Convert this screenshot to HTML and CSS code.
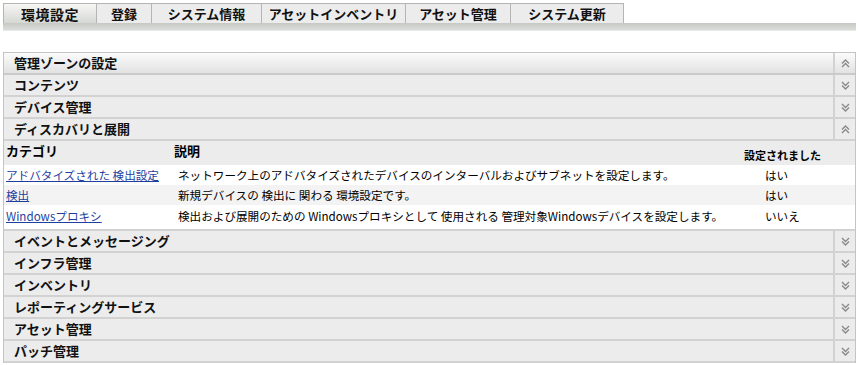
FILE: index.html
```html
<!DOCTYPE html>
<html lang="ja">
<head>
    <meta charset="UTF-8">
    <title>環境設定</title>
    <link rel="stylesheet" href="styles.css">
</head>
<body>
    <div class="tabs">
        <span class="tab active">環境設定</span>
        <span class="tab">登録</span>
        <span class="tab">システム情報</span>
        <span class="tab">アセットインベントリ</span>
        <span class="tab">アセット管理</span>
        <span class="tab">システム更新</span>
    </div>
    <div class="tab-bar"></div>

    <div class="panel">
        <div class="section first"><span class="title">管理ゾーンの設定</span><span class="toggle"><svg viewBox="0 0 9 9"><path d="M1 4.5L4.5 1L8 4.5M1 8L4.5 4.5L8 8"/></svg></span></div>
        <div class="section"><span class="title">コンテンツ</span><span class="toggle"><svg viewBox="0 0 9 9"><path d="M1 1L4.5 4.5L8 1M1 4.5L4.5 8L8 4.5"/></svg></span></div>
        <div class="section"><span class="title">デバイス管理</span><span class="toggle"><svg viewBox="0 0 9 9"><path d="M1 1L4.5 4.5L8 1M1 4.5L4.5 8L8 4.5"/></svg></span></div>
        <div class="section"><span class="title">ディスカバリと展開</span><span class="toggle"><svg viewBox="0 0 9 9"><path d="M1 4.5L4.5 1L8 4.5M1 8L4.5 4.5L8 8"/></svg></span></div>
        <table class="settings">
            <thead>
                <tr>
                    <th class="col-cat">カテゴリ</th>
                    <th class="col-desc">説明</th>
                    <th class="col-set">設定されました</th>
                </tr>
            </thead>
            <tbody>
                <tr>
                    <td><a href="#">アドバタイズされた 検出設定</a></td>
                    <td>ネットワーク上のアドバタイズされたデバイスのインターバルおよびサブネットを設定します。</td>
                    <td class="val">はい</td>
                </tr>
                <tr class="alt">
                    <td><a href="#">検出</a></td>
                    <td>新規デバイスの 検出に 関わる 環境設定です。</td>
                    <td class="val">はい</td>
                </tr>
                <tr class="last">
                    <td><a href="#">Windowsプロキシ</a></td>
                    <td>検出および展開のための Windowsプロキシとして 使用される 管理対象Windowsデバイスを設定します。</td>
                    <td class="val">いいえ</td>
                </tr>
            </tbody>
        </table>
        <div class="section"><span class="title">イベントとメッセージング</span><span class="toggle"><svg viewBox="0 0 9 9"><path d="M1 1L4.5 4.5L8 1M1 4.5L4.5 8L8 4.5"/></svg></span></div>
        <div class="section"><span class="title">インフラ管理</span><span class="toggle"><svg viewBox="0 0 9 9"><path d="M1 1L4.5 4.5L8 1M1 4.5L4.5 8L8 4.5"/></svg></span></div>
        <div class="section"><span class="title">インベントリ</span><span class="toggle"><svg viewBox="0 0 9 9"><path d="M1 1L4.5 4.5L8 1M1 4.5L4.5 8L8 4.5"/></svg></span></div>
        <div class="section"><span class="title">レポーティングサービス</span><span class="toggle"><svg viewBox="0 0 9 9"><path d="M1 1L4.5 4.5L8 1M1 4.5L4.5 8L8 4.5"/></svg></span></div>
        <div class="section"><span class="title">アセット管理</span><span class="toggle"><svg viewBox="0 0 9 9"><path d="M1 1L4.5 4.5L8 1M1 4.5L4.5 8L8 4.5"/></svg></span></div>
        <div class="section"><span class="title">パッチ管理</span><span class="toggle"><svg viewBox="0 0 9 9"><path d="M1 1L4.5 4.5L8 1M1 4.5L4.5 8L8 4.5"/></svg></span></div>
    </div>
</body>
</html>
```

FILE: styles.css
```css
body {
    font-family: "Noto Sans CJK JP", "Noto Sans", sans-serif;
    font-size: 12px;
    color: #000;
    background-color: #fff;
    margin: 3px;
}

/* tabs */
.tabs {
    display: flex;
    height: 20px;
}

.tab {
    display: flex;
    align-items: center;
    justify-content: center;
    box-sizing: border-box;
    height: 20px;
    background-color: #ececec;
    border: 1px solid #b4b4b4;
    border-left: none;
    border-bottom: none;
    font-weight: bold;
    font-size: 13px;
    line-height: 1;
    color: #111;
}

.tab:nth-child(1) { width: 94px; border-left: 1px solid #b4b4b4; }
.tab:nth-child(2) { width: 55px; }
.tab:nth-child(3) { width: 110px; }
.tab:nth-child(4) { width: 144px; }
.tab:nth-child(5) { width: 105px; }
.tab:nth-child(6) { width: 113px; }

.tab.active {
    background: linear-gradient(#f6f6f4, #d6d8d4);
    font-size: 14px;
    letter-spacing: 0.5px;
}

.tab-bar {
    height: 7px;
    background: linear-gradient(#c6c8c4, #dcdedb);
    border-bottom: 1px solid #e8e8e8;
}

/* panel */
.panel {
    margin-top: 21px;
    border: 1px solid #c4c4c4;
    border-bottom: none;
}

.section {
    display: flex;
    height: 22px;
    box-sizing: border-box;
    background-color: #ececec;
    border-bottom: 2px solid #d2d2d2;
}

.section.first {
    background: linear-gradient(#fbfbfb, #e2e2e2);
    border-bottom-color: #cacaca;
}

.section .title {
    flex: 1;
    padding-left: 10px;
    font-weight: bold;
    font-size: 13px;
    line-height: 19px;
    color: #111;
}

.section .toggle {
    width: 20px;
    display: flex;
    align-items: center;
    justify-content: center;
    border-left: 2px solid #d2d2d2;
}

.toggle svg {
    width: 9px;
    height: 9px;
    fill: none;
    stroke: #8a8a8a;
    stroke-width: 1.4;
}

/* table */
.settings {
    width: 100%;
    border-collapse: collapse;
}

.settings th {
    background-color: #ececec;
    height: 24px;
    box-sizing: border-box;
    text-align: left;
    font-weight: bold;
    font-size: 13px;
    line-height: 16px;
    padding: 0 0 5px 0;
    vertical-align: middle;
}

.settings th.col-cat {
    width: 170px;
    padding-left: 2px;
}

.settings th.col-set {
    width: 120px;
    font-size: 11px;
    padding: 4px 0 0 9px;
}

.settings td {
    height: 20px;
    box-sizing: border-box;
    padding: 0 0 0 2px;
    font-size: 11.6px;
    line-height: 16px;
    white-space: nowrap;
}

.settings td:nth-child(2) {
    padding-left: 4px;
}

.settings tr.alt td {
    background-color: #f3f3f3;
}

.settings tr.last td {
    height: 25px;
    padding-bottom: 3px;
    border-bottom: 2px solid #d2d2d2;
}

.settings td.val {
    padding-left: 30px;
}

a {
    color: #1f3f9f;
    text-decoration: underline;
}
```
